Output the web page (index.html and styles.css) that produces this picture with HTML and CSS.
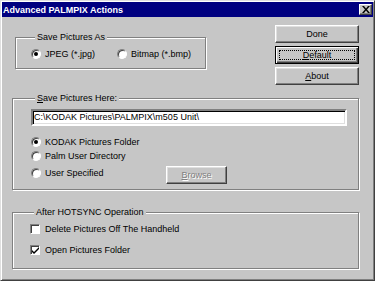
FILE: index.html
```html
<!DOCTYPE html>
<html lang="en">
<head>
    <meta charset="UTF-8">
    <meta name="viewport" content="width=device-width, initial-scale=1.0">
    <title>Advanced PALMPIX Actions</title>
    <link rel="stylesheet" href="styles.css">
</head>
<body>
    <div class="window">
        <div class="titlebar">
            <span class="title">Advanced PALMPIX Actions</span>
            <button class="close" aria-label="Close">
                <svg width="8" height="7" viewBox="0 0 8 7">
                    <path d="M0 0h2l2 2.5L6 0h2L5 3.5 8 7H6L4 4.5 2 7H0l3-3.5z" fill="#000"/>
                </svg>
            </button>
        </div>

        <div class="content">
            <div class="top-row">
                <div class="group group-format">
                    <span class="legend">Save Pictures As</span>
                    <div class="row">
                        <label class="option option-jpeg"><span class="radio checked"></span>JPEG (*.jpg)</label>
                        <label class="option"><span class="radio"></span>Bitmap (*.bmp)</label>
                    </div>
                </div>

                <div class="buttons">
                    <button class="btn">Done</button>
                    <button class="btn default"><u>D</u>efault</button>
                    <button class="btn"><u>A</u>bout</button>
                </div>
            </div>

            <div class="group group-location">
                <span class="legend"><u>S</u>ave Pictures Here:</span>
                <div class="path-field">C:\KODAK Pictures\PALMPIX\m505 Unit\</div>
                <label class="option first"><span class="radio checked"></span>KODAK Pictures Folder</label>
                <label class="option"><span class="radio"></span>Palm User Directory</label>
                <div class="row browse-row">
                    <label class="option option-user"><span class="radio"></span>User Specified</label>
                    <button class="btn browse" disabled><u>B</u>rowse</button>
                </div>
            </div>

            <div class="group group-sync">
                <span class="legend">After HOTSYNC Operation</span>
                <label class="option first"><span class="check"></span>Delete Pictures Off The Handheld</label>
                <label class="option second">
                    <span class="check">
                        <svg width="7" height="7" viewBox="0 0 7 7">
                            <path d="M0 3l2 2 5-5v2L2 7 0 5z" fill="#000"/>
                        </svg>
                    </span>Open Pictures Folder
                </label>
            </div>
        </div>
    </div>
</body>
</html>
```

FILE: styles.css
```css
* {
    box-sizing: border-box;
}

body {
    margin: 0;
    background: #c6c6c6;
    font-family: "Liberation Sans", Arial, sans-serif;
    font-size: 9px;
    color: #000;
}

.window {
    width: 375px;
    height: 281px;
    padding: 1px;
    border: 1px solid;
    border-color: #dfdfdf #404040 #404040 #dfdfdf;
    box-shadow: inset 1px 1px #fff, inset -1px -1px #808080;
    display: flex;
    flex-direction: column;
}

/* Title bar */
.titlebar {
    height: 15px;
    padding: 0 1px;
    background: #000080;
    color: #fff;
    font-weight: bold;
    display: flex;
    align-items: center;
    justify-content: space-between;
}

.close {
    width: 13px;
    height: 11px;
    padding: 0;
    background: #c6c6c6;
    border: 1px solid;
    border-color: #fff #404040 #404040 #fff;
    box-shadow: inset -1px -1px #808080;
    display: flex;
    align-items: center;
    justify-content: center;
}

.content {
    padding: 8px 14px 0 10px;
}

.top-row {
    display: flex;
    justify-content: space-between;
    align-items: flex-start;
}

/* Group boxes */
.group {
    border: 1px solid #808080;
    box-shadow: inset 1px 1px #fff, 1px 1px #fff;
    display: flex;
    flex-direction: column;
}

.legend {
    align-self: flex-start;
    margin: -6px 0 0 4px;
    padding: 0 2px;
    background: #c6c6c6;
    line-height: 11px;
}

.group-format {
    width: 191px;
    margin: 12px 0 0 3px;
    padding: 0 0 7px 15px;
}

.group-format .row {
    margin-top: 4px;
}

.group-location {
    margin-top: 13px;
    padding: 0 11px 5px 18px;
}

.group-sync {
    margin-top: 22px;
    padding: 0 0 11px 17px;
}

.row {
    display: flex;
    align-items: flex-start;
}

.option {
    height: 14px;
    display: flex;
    align-items: center;
    gap: 4px;
}

.option-jpeg {
    width: 86px;
}

.option-user {
    width: 135px;
}

.group-location .first {
    margin-top: 9px;
}

.browse-row {
    margin-top: 3px;
}

.group-sync .option {
    gap: 5px;
}

.group-sync .first {
    margin-top: 4px;
}

.group-sync .second {
    margin-top: 7px;
}

/* Controls */
.radio {
    width: 10px;
    height: 10px;
    flex: none;
    border-radius: 50%;
    background: #fff;
    border: 1px solid;
    border-color: #808080 #fff #fff #808080;
    box-shadow: inset 1px 1px #404040;
    display: flex;
    align-items: center;
    justify-content: center;
}

.radio.checked::after {
    content: "";
    width: 4px;
    height: 4px;
    border-radius: 50%;
    background: #000;
}

.check {
    width: 10px;
    height: 10px;
    flex: none;
    background: #fff;
    border: 1px solid;
    border-color: #808080 #fff #fff #808080;
    box-shadow: inset 1px 1px #404040;
    display: flex;
    align-items: center;
    justify-content: center;
}

.path-field {
    height: 17px;
    margin-top: 5px;
    padding: 0 1px;
    background: #fff;
    border: 2px solid;
    border-color: #808080 #fff #fff #808080;
    box-shadow: inset 1px 1px #000, inset -1px -1px #dfdfdf;
    line-height: 13px;
    white-space: nowrap;
    overflow: hidden;
}

/* Buttons */
.buttons {
    width: 84px;
    display: flex;
    flex-direction: column;
    gap: 3px;
}

.btn {
    height: 18px;
    padding: 0;
    font: inherit;
    color: #000;
    background: #c6c6c6;
    border: 1px solid;
    border-color: #fff #404040 #404040 #fff;
    box-shadow: inset -1px -1px #808080, inset 1px 1px #dfdfdf;
}

.btn.default {
    border-color: #000;
    box-shadow: inset 1px 1px #fff, inset -1px -1px #404040, inset -2px -2px #808080;
    outline: 1px dotted #000;
    outline-offset: -5px;
}

.btn.browse {
    width: 61px;
    color: #808080;
    text-shadow: 1px 1px #fff;
}
```
